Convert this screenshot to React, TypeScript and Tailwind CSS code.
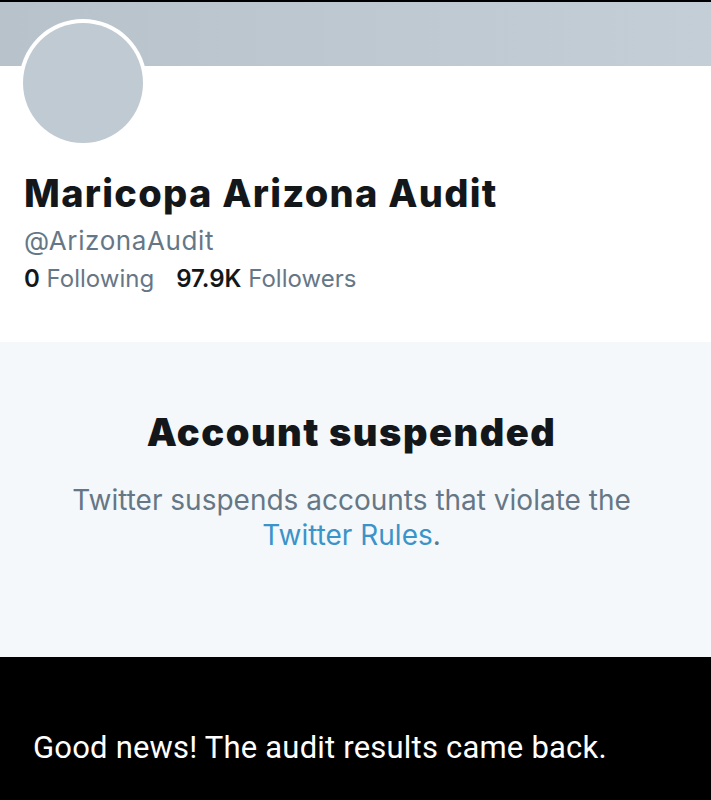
import React from 'react';

const profile = {
  name: 'Maricopa Arizona Audit',
  handle: '@ArizonaAudit',
  following: '0',
  followers: '97.9K',
};

export default function App() {
  return (
    <div className="w-[711px] h-[800px] flex flex-col bg-black overflow-hidden">
      {/* Top edge */}
      <div className="h-[2px] bg-black" />

      {/* Banner */}
      <div className="h-[64px] bg-gradient-to-r from-[#b8c2ca] to-[#c4ced6]" />

      {/* Profile header */}
      <div className="h-[276px] bg-white px-[24px] font-['Inter',sans-serif]">
        <div className="-mt-[47px] -ml-[5px] w-[128px] h-[128px] rounded-full bg-white p-[4px]">
          <div className="w-full h-full rounded-full bg-[#c0cad2]" />
        </div>
        <h1 className="mt-[27px] text-[38px] leading-none font-extrabold text-[#14171a] tracking-[1.3px]">
          {profile.name}
        </h1>
        <p className="mt-[16px] text-[26px] leading-none text-[#657786] tracking-[0.6px]">{profile.handle}</p>
        <div className="mt-[13px] flex items-center gap-[22px] text-[24px] leading-none">
          <span>
            <span className="font-semibold text-[#14171a]">{profile.following}</span>
            <span className="text-[#657786]"> Following</span>
          </span>
          <span>
            <span className="font-semibold text-[#14171a]">{profile.followers}</span>
            <span className="text-[#657786]"> Followers</span>
          </span>
        </div>
      </div>

      {/* Suspended notice */}
      <div className="h-[315px] bg-[#f5f8fa] flex flex-col items-center pt-[71px] pr-[8px] font-['Inter',sans-serif]">
        <h2 className="text-[38px] leading-none font-black text-[#14171a] tracking-[1.5px]">
          Account suspended
        </h2>
        <p className="mt-[32px] text-[28px] leading-[35px] text-[#657786] text-center">
          Twitter suspends accounts that violate the
          <br />
          <span className="text-[#3b94c9]">Twitter Rules</span>.
        </p>
      </div>

      {/* Caption */}
      <div className="flex-1 bg-black px-[33px] pt-[75px]">
        <p className="text-[31px] leading-none text-white tracking-[0.2px] font-['Roboto',sans-serif]">
          Good news! The audit results came back.
        </p>
      </div>
    </div>
  );
}
